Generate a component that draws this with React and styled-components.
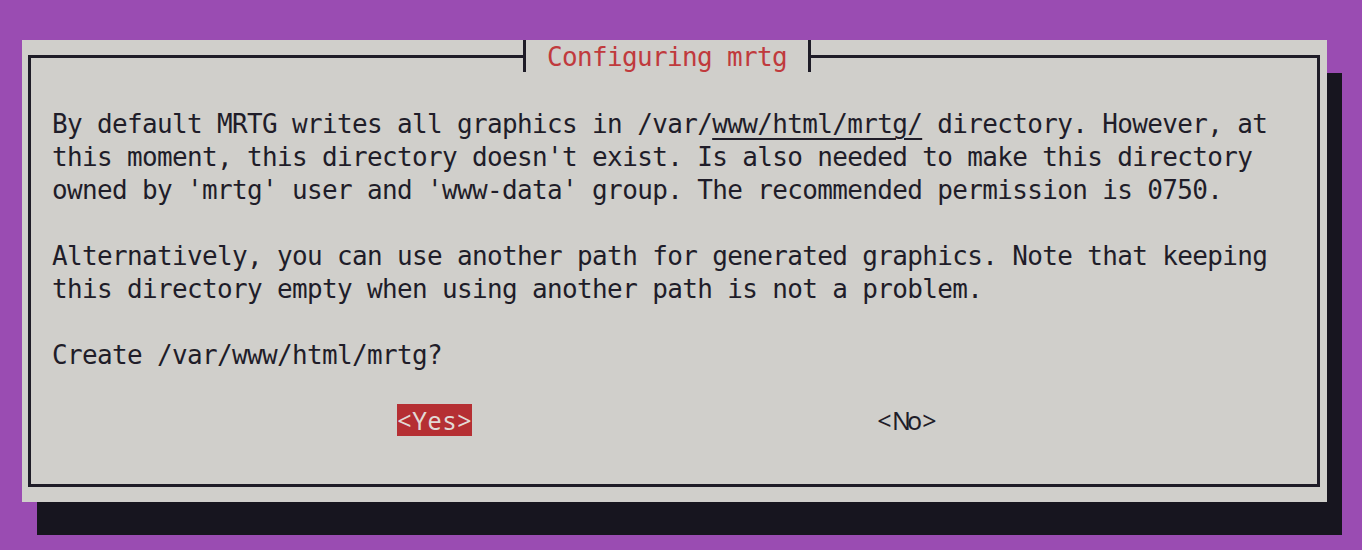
import styled, { createGlobalStyle } from "styled-components";

const GlobalStyle = createGlobalStyle`
  html, body {
    margin: 0;
    padding: 0;
    background: #9a4cb2;
  }
`;

const Screen = styled.div`
  width: 1362px;
  height: 550px;
  background: #9a4cb2;
  padding: 40px 0 0 22px;
  box-sizing: border-box;
  overflow: hidden;
`;

const Dialog = styled.div`
  position: relative;
  width: 1305px;
  height: 462px;
  box-sizing: border-box;
  padding: 15px 7px 15px 6px;
  background: #d0cfcb;
  box-shadow: 15px 33px 0 0 #17151f;
`;

const Frame = styled.div`
  height: 100%;
  box-sizing: border-box;
  border: 3px solid #1e1c27;
  padding: 50px 0 0 21px;
`;

const Title = styled.div`
  position: absolute;
  top: 0;
  left: 501px;
  width: 288px;
  height: 32px;
  box-sizing: border-box;
  background: #d0cfcb;
  border-left: 3px solid #1e1c27;
  border-right: 3px solid #1e1c27;
  padding: 2px 0 0 21px;
  color: #c03a3d;
  font-family: "DejaVu Sans Mono", monospace;
  font-size: 26px;
  letter-spacing: -0.65px;
  line-height: 30px;
  white-space: pre;
`;

const Para = styled.p`
  margin: 0 0 ${(p) => (p.last ? "31px" : "33px")} 0;
  color: #1f1d29;
  font-family: "DejaVu Sans Mono", monospace;
  font-size: 26px;
  letter-spacing: -0.65px;
  line-height: 33px;
  white-space: pre;
`;

const Link = styled.span`
  text-decoration: underline;
  text-decoration-thickness: 2px;
  text-underline-offset: 5px;
`;

const ButtonRow = styled.div`
  display: flex;
  gap: 405px;
  padding-left: 345px;
  height: 33px;
`;

const Button = styled.div`
  display: flex;
  height: 32px;
  margin-top: 1px;
  background: ${(p) => (p.active ? "#b52f33" : "transparent")};
  color: ${(p) => (p.active ? "#e2dad6" : "#1f1d29")};
  font-family: "Noto Sans", "Open Sans", sans-serif;
  font-size: 25px;
  line-height: 32px;
`;

const Cell = styled.span`
  display: inline-block;
  width: 15px;
  text-align: center;
`;

function Label({ text }) {
  return text.split("").map((c, i) => <Cell key={i}>{c}</Cell>);
}

export default function App() {
  return (
    <>
      <GlobalStyle />
      <Screen>
        <Dialog>
          <Title>Configuring mrtg</Title>
          <Frame>
            <Para>
              {"By default MRTG writes all graphics in /var/"}
              <Link>www/html/mrtg/</Link>
              {" directory. However, at\nthis moment, this directory doesn't exist. Is also needed to make this directory\nowned by 'mrtg' user and 'www-data' group. The recommended permission is 0750."}
            </Para>
            <Para>
              {"Alternatively, you can use another path for generated graphics. Note that keeping\nthis directory empty when using another path is not a problem."}
            </Para>
            <Para last>Create /var/www/html/mrtg?</Para>
            <ButtonRow>
              <Button active>
                <Label text="<Yes>" />
              </Button>
              <Button>
                <Label text="<No>" />
              </Button>
            </ButtonRow>
          </Frame>
        </Dialog>
      </Screen>
    </>
  );
}
